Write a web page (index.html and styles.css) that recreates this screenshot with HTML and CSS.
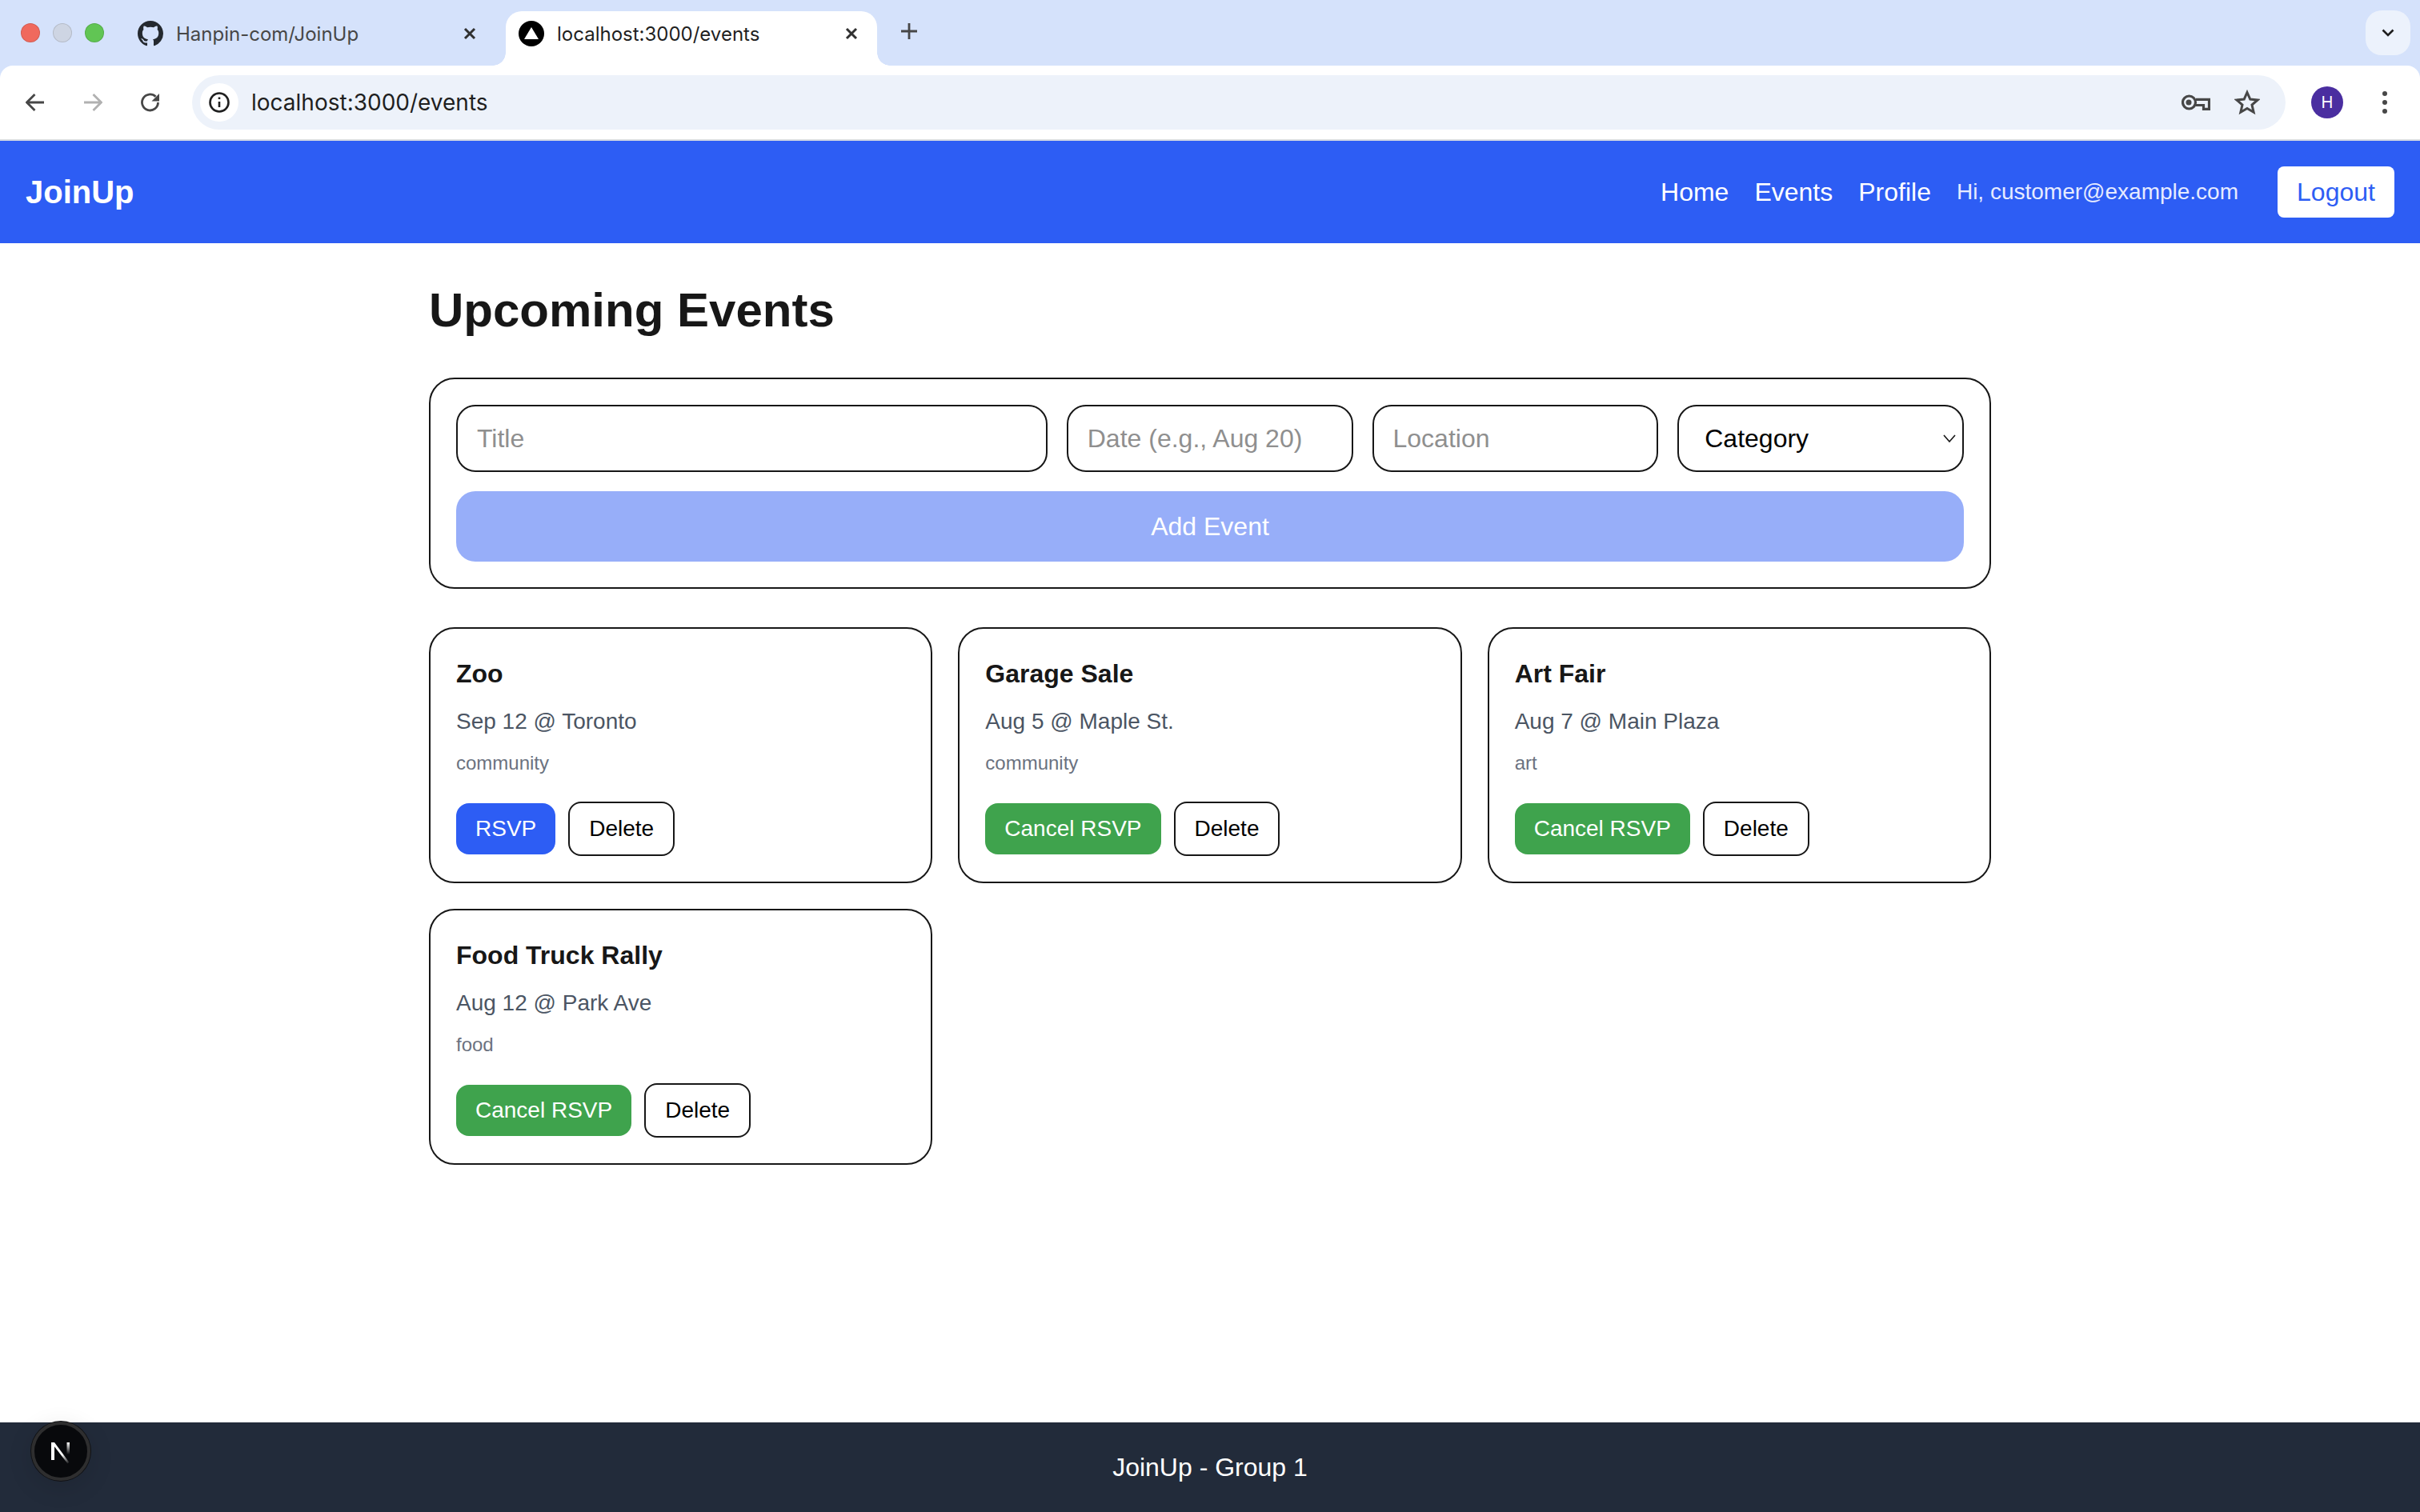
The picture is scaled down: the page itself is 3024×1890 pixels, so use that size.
FILE: index.html
```html
<!DOCTYPE html>
<html lang="en">
<head>
    <meta charset="UTF-8">
    <meta name="viewport" content="width=device-width, initial-scale=1.0">
    <title>JoinUp</title>
    <link rel="stylesheet" href="styles.css">
</head>
<body>
    <!-- Browser chrome -->
    <div class="tabstrip">
        <div class="lights">
            <span class="light light-red"></span>
            <span class="light light-grey"></span>
            <span class="light light-green"></span>
        </div>
        <div class="tab">
            <svg class="favicon" viewBox="0 0 16 16"><path fill="#24292f" d="M8 0C3.58 0 0 3.58 0 8c0 3.54 2.29 6.53 5.47 7.59.4.07.55-.17.55-.38 0-.19-.01-.82-.01-1.49-2.01.37-2.53-.49-2.69-.94-.09-.23-.48-.94-.82-1.13-.28-.15-.68-.52-.01-.53.63-.01 1.08.58 1.23.82.72 1.21 1.87.87 2.33.66.07-.52.28-.87.51-1.07-1.78-.2-3.64-.89-3.64-3.95 0-.87.31-1.59.82-2.15-.08-.2-.36-1.02.08-2.12 0 0 .67-.21 2.2.82.64-.18 1.32-.27 2-.27.68 0 1.36.09 2 .27 1.53-1.04 2.2-.82 2.2-.82.44 1.1.16 1.92.08 2.12.51.56.82 1.27.82 2.15 0 3.07-1.87 3.75-3.65 3.95.29.25.54.73.54 1.48 0 1.07-.01 1.93-.01 2.2 0 .21.15.46.55.38A8.013 8.013 0 0016 8c0-4.42-3.58-8-8-8z"/></svg>
            <span class="tab-title tab-title-dim">Hanpin-com/JoinUp</span>
            <svg class="tab-close" viewBox="0 0 16 16"><path d="M2 2l12 12M14 2L2 14"/></svg>
        </div>
        <div class="tab tab-active">
            <svg class="favicon" viewBox="0 0 32 32"><circle cx="16" cy="16" r="16" fill="#000"/><path fill="#fff" d="M16 8l9 15H7z"/></svg>
            <span class="tab-title">localhost:3000/events</span>
            <svg class="tab-close" viewBox="0 0 16 16"><path d="M2 2l12 12M14 2L2 14"/></svg>
        </div>
        <svg class="tab-new" viewBox="0 0 20 20"><path d="M10 0v20M0 10h20"/></svg>
        <div class="tab-search">
            <svg viewBox="0 0 16 10"><path d="M1.500 1.500L8 8l6.500-6.500"/></svg>
        </div>
    </div>
    <div class="toolbar">
        <svg class="tool" viewBox="0 0 24 24"><path d="M23 12H2M11.500 2L1.500 12l10 10"/></svg>
        <svg class="tool tool-off" viewBox="0 0 24 24"><path d="M1 12h21M12.500 2l10 10-10 10"/></svg>
        <svg class="tool" viewBox="0 0 24 24"><path d="M21.500 12a10 10 0 1 1-3-7.200"/><path class="tool-fill" d="M23 1v9.500h-9.500z"/></svg>
        <div class="omnibox">
            <span class="site-chip">
                <svg viewBox="0 0 28 28"><circle cx="14" cy="14" r="11.500"/><path d="M14 13v7M14 7.500v2.500"/></svg>
            </span>
            <span class="url">localhost:3000/events</span>
            <svg class="omni-key" viewBox="0 0 36 20"><circle cx="9.500" cy="10" r="8"/><circle class="tool-fill" cx="9" cy="10" r="3.500"/><path d="M18 6.300H34.500V18.300H27.500V13.500H18"/></svg>
            <svg class="omni-star" viewBox="0 0 32 32"><path d="M16 3.500l3.800 8.600 9.200.900-7 6.100 2.100 9.100-8.100-4.800-8.100 4.800 2.100-9.100-7-6.100 9.200-.900z"/></svg>
        </div>
        <span class="avatar">H</span>
        <span class="kebab"><i></i><i></i><i></i></span>
    </div>

    <!-- App -->
    <div class="page">
        <nav class="navbar">
            <a class="brand" href="#">JoinUp</a>
            <div class="nav-links">
                <a href="#">Home</a>
                <a href="#">Events</a>
                <a href="#">Profile</a>
                <span class="greeting">Hi, customer@example.com</span>
                <button class="logout">Logout</button>
            </div>
        </nav>

        <main class="content">
            <h1>Upcoming Events</h1>

            <form class="event-form">
                <div class="form-fields">
                    <input type="text" placeholder="Title">
                    <input type="text" placeholder="Date (e.g., Aug 20)">
                    <input type="text" placeholder="Location">
                    <div class="select-wrap">
                        <select>
                            <option>Category</option>
                        </select>
                        <svg viewBox="0 0 16 10"><path d="M1 1l7 8 7-8"/></svg>
                    </div>
                </div>
                <button type="button" class="add-event">Add Event</button>
            </form>

            <div class="event-grid">
                <div class="event-card">
                    <h3>Zoo</h3>
                    <p class="event-when">Sep 12 @ Toronto</p>
                    <p class="event-cat">community</p>
                    <div class="event-actions">
                        <button class="btn btn-rsvp">RSVP</button>
                        <button class="btn btn-delete">Delete</button>
                    </div>
                </div>
                <div class="event-card">
                    <h3>Garage Sale</h3>
                    <p class="event-when">Aug 5 @ Maple St.</p>
                    <p class="event-cat">community</p>
                    <div class="event-actions">
                        <button class="btn btn-cancel">Cancel RSVP</button>
                        <button class="btn btn-delete">Delete</button>
                    </div>
                </div>
                <div class="event-card">
                    <h3>Art Fair</h3>
                    <p class="event-when">Aug 7 @ Main Plaza</p>
                    <p class="event-cat">art</p>
                    <div class="event-actions">
                        <button class="btn btn-cancel">Cancel RSVP</button>
                        <button class="btn btn-delete">Delete</button>
                    </div>
                </div>
                <div class="event-card">
                    <h3>Food Truck Rally</h3>
                    <p class="event-when">Aug 12 @ Park Ave</p>
                    <p class="event-cat">food</p>
                    <div class="event-actions">
                        <button class="btn btn-cancel">Cancel RSVP</button>
                        <button class="btn btn-delete">Delete</button>
                    </div>
                </div>
            </div>
        </main>

        <footer class="footer">JoinUp - Group 1</footer>
    </div>

    <!-- Next.js dev badge -->
    <div class="next-badge">
        <svg viewBox="0 0 30 32">
            <defs>
                <linearGradient id="n-fade-a" gradientUnits="userSpaceOnUse" x1="2" y1="5" x2="26" y2="31">
                    <stop offset="0.6" stop-color="#fff"/>
                    <stop offset="1" stop-color="#fff" stop-opacity="0"/>
                </linearGradient>
                <linearGradient id="n-fade-b" gradientUnits="userSpaceOnUse" x1="0" y1="5" x2="0" y2="20">
                    <stop offset="0" stop-color="#fff"/>
                    <stop offset="1" stop-color="#fff" stop-opacity="0"/>
                </linearGradient>
            </defs>
            <path fill="#fff" d="M3 5h4v22H3z"/>
            <path fill="url(#n-fade-a)" d="M3 5h4L25.500 30l-2 1.500z"/>
            <path fill="url(#n-fade-b)" d="M22.500 5h3.500v16h-3.500z"/>
        </svg>
    </div>
</body>
</html>
```

FILE: styles.css
```css
* {
    box-sizing: border-box;
}
html, body {
    margin: 0;
    height: 100%;
}
body {
    display: flex;
    flex-direction: column;
    height: 1890px;
    background-color: #d5e2fb;
    color: #171717;
    font-family: "Liberation Sans", Arial, sans-serif;
    overflow: hidden;
}
svg {
    display: block;
}

/* browser chrome */
.tabstrip {
    display: flex;
    align-items: center;
    flex: none;
    height: 82px;
    padding-right: 12px;
    font-family: Inter, "Liberation Sans", sans-serif;
}
.lights {
    display: flex;
    gap: 16px;
    padding-left: 26px;
    width: 155px;
}
.light {
    width: 24px;
    height: 24px;
    border-radius: 50%;
    border: 1px solid rgba(0, 0, 0, 0.12);
}
.light-red { background-color: #f0695d; }
.light-grey { background-color: #ced5e3; }
.light-green { background-color: #61c554; }
.tab {
    position: relative;
    display: flex;
    align-items: center;
    align-self: flex-end;
    gap: 16px;
    width: 464px;
    height: 68px;
    padding: 0 24px 12px 17px;
    margin-right: 13px;
    font-size: 24px;
}
.tab-active {
    background-color: #fff;
    border-radius: 20px 20px 0 0;
    padding-left: 16px;
    margin-right: 0;
}
.tab-active::before,
.tab-active::after {
    content: "";
    position: absolute;
    bottom: 0;
    width: 16px;
    height: 16px;
}
.tab-active::before {
    left: -16px;
    background: radial-gradient(circle at 0 0, #d5e2fb 15.500px, #fff 16px);
}
.tab-active::after {
    right: -16px;
    background: radial-gradient(circle at 100% 0, #d5e2fb 15.500px, #fff 16px);
}
.favicon {
    flex: none;
    width: 32px;
    height: 32px;
}
.tab-title {
    flex: 1;
    color: #1f1f1f;
    white-space: nowrap;
}
.tab-title-dim {
    color: #474747;
}
.tab-close {
    flex: none;
    width: 16px;
    height: 16px;
    fill: none;
    stroke: #303030;
    stroke-width: 3;
}
.tab-new {
    flex: none;
    width: 20px;
    height: 20px;
    margin: -4px 0 0 30px;
    fill: none;
    stroke: #474747;
    stroke-width: 2.800;
}
.tab-search {
    display: flex;
    align-items: center;
    justify-content: center;
    width: 56px;
    height: 56px;
    margin-left: auto;
    background-color: #ecf2fc;
    border-radius: 20px;
}
.tab-search svg {
    width: 16px;
    height: 10px;
    fill: none;
    stroke: #1f1f1f;
    stroke-width: 2.600;
}
.toolbar {
    position: relative;
    display: flex;
    align-items: center;
    flex: none;
    height: 94px;
    padding: 0 20px 0 32px;
    background-color: #fff;
    border-bottom: 2px solid #d9dce1;
    border-radius: 16px 16px 0 0;
}
.tool {
    flex: none;
    width: 24px;
    height: 24px;
    margin-right: 48px;
    fill: none;
    stroke: #474747;
    stroke-width: 2.800;
}
.tool-off {
    stroke: #b1b1b1;
}
.tool-fill {
    fill: #474747;
    stroke: none;
}
.toolbar .tool:nth-of-type(3) {
    margin-right: 40px;
}
.omnibox {
    display: flex;
    align-items: center;
    flex: 1;
    height: 68px;
    padding: 0 30px 0 10px;
    background-color: #edf2fa;
    border-radius: 34px;
}
.site-chip {
    display: flex;
    align-items: center;
    justify-content: center;
    width: 48px;
    height: 48px;
    background-color: #fff;
    border-radius: 50%;
}
.site-chip svg {
    width: 28px;
    height: 28px;
    fill: none;
    stroke: #1f1f1f;
    stroke-width: 2.600;
}
.url {
    flex: 1;
    margin-left: 16px;
    font-family: Inter, "Liberation Sans", sans-serif;
    font-size: 28px;
    color: #1f1f1f;
}
.omni-key {
    width: 36px;
    height: 20px;
    margin-right: 30px;
    fill: none;
    stroke: #474747;
    stroke-width: 3.200;
}
.omni-star {
    width: 32px;
    height: 32px;
    margin-right: 2px;
    fill: none;
    stroke: #474747;
    stroke-width: 3;
}
.avatar {
    display: flex;
    align-items: center;
    justify-content: center;
    flex: none;
    width: 40px;
    height: 40px;
    margin-left: 32px;
    background-color: #4a2ea0;
    border-radius: 50%;
    color: #fff;
    font-family: Inter, "Liberation Sans", sans-serif;
    font-size: 20px;
}
.kebab {
    display: flex;
    flex-direction: column;
    align-items: center;
    gap: 5px;
    flex: none;
    width: 48px;
    margin-left: 28px;
}
.kebab i {
    width: 6px;
    height: 6px;
    background-color: #474747;
    border-radius: 50%;
}

/* app */
.page {
    display: flex;
    flex-direction: column;
    flex: 1;
    background-color: #fff;
}
.navbar {
    display: flex;
    align-items: center;
    justify-content: space-between;
    flex: none;
    height: 128px;
    padding: 0 32px;
    background-color: #2d5df4;
    color: #fff;
}
.navbar a {
    color: #fff;
    text-decoration: none;
}
.brand {
    font-size: 40px;
    font-weight: bold;
}
.nav-links {
    display: flex;
    align-items: center;
    gap: 32px;
    font-size: 32px;
}
.greeting {
    font-size: 28px;
    color: #e6ebff;
}
.logout {
    width: 146px;
    height: 64px;
    margin-left: 17px;
    background-color: #fff;
    border: none;
    border-radius: 8px;
    color: #2d5df4;
    font-family: inherit;
    font-size: 32px;
}
.content {
    flex: 1;
    width: 1952px;
    margin: 0 auto;
    padding-top: 48px;
}
h1 {
    margin: 0 0 48px;
    font-size: 60px;
    line-height: 72px;
    font-weight: bold;
}
.event-form {
    display: flex;
    flex-direction: column;
    gap: 24px;
    height: 264px;
    padding: 32px;
    border: 2px solid #171717;
    border-radius: 32px;
}
.form-fields {
    display: grid;
    grid-template-columns: 2.065fr 1fr 1fr 1fr;
    gap: 24px;
}
.form-fields input,
.form-fields select {
    width: 100%;
    height: 84px;
    padding: 0 24px;
    background-color: #fff;
    border: 2px solid #171717;
    border-radius: 24px;
    color: #000;
    font-family: inherit;
    font-size: 32px;
    outline: none;
}
.form-fields input::placeholder {
    color: #8f8f8f;
}
.select-wrap {
    position: relative;
}
.form-fields select {
    padding-left: 32px;
    appearance: none;
}
.select-wrap svg {
    position: absolute;
    right: 10px;
    top: 37px;
    width: 16px;
    height: 10px;
    fill: none;
    stroke: #171717;
    stroke-width: 1.600;
}
.add-event {
    height: 88px;
    background-color: #97aef9;
    border: none;
    border-radius: 24px;
    color: #fff;
    font-family: inherit;
    font-size: 32px;
}
.event-grid {
    display: grid;
    grid-template-columns: repeat(3, 1fr);
    gap: 32px;
    margin-top: 48px;
}
.event-card {
    height: 320px;
    padding: 32px;
    border: 2px solid #171717;
    border-radius: 32px;
}
.event-card h3 {
    margin: 0 0 14px;
    font-size: 32px;
    line-height: 48px;
    font-weight: bold;
}
.event-when {
    margin: 0 0 12px;
    font-size: 28px;
    line-height: 44px;
    color: #4b5563;
}
.event-cat {
    margin: 0 0 30px;
    font-size: 24px;
    line-height: 36px;
    color: #6b7280;
}
.event-actions {
    display: flex;
    align-items: center;
    gap: 16px;
}
.btn {
    height: 64px;
    padding: 0 24px;
    border: none;
    border-radius: 16px;
    font-family: inherit;
    font-size: 28px;
}
.btn-rsvp {
    background-color: #2d5df4;
    color: #fff;
}
.btn-cancel {
    background-color: #3fa34d;
    color: #fff;
}
.btn-delete {
    height: 68px;
    background-color: #fff;
    border: 2px solid #171717;
    color: #000;
}
.footer {
    display: flex;
    align-items: center;
    justify-content: center;
    flex: none;
    height: 112px;
    background-color: #222b3a;
    color: #fff;
    font-size: 32px;
}

.next-badge {
    position: fixed;
    left: 39px;
    bottom: 39px;
    display: flex;
    align-items: center;
    justify-content: center;
    width: 74px;
    height: 74px;
    background-color: #08090c;
    border: 4px solid #2e2e2f;
    border-radius: 50%;
    box-shadow: 0 0 0 1px #101114, 0 8px 32px rgba(0, 0, 0, 0.12);
}
.next-badge svg {
    flex: none;
    width: 30px;
    height: 32px;
}
```
